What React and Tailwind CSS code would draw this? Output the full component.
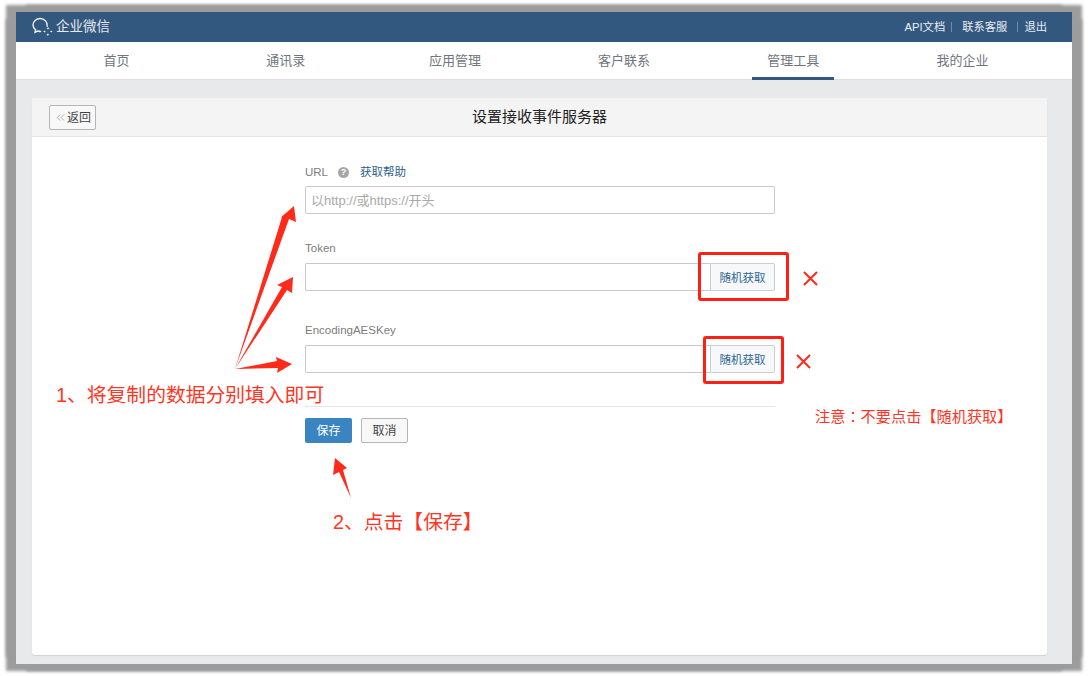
import React from "react";
import { ChevronsLeft } from "lucide-react";

const tabs = ["首页", "通讯录", "应用管理", "客户联系", "管理工具", "我的企业"];

function Logo() {
  return (
    <svg width="22" height="20" viewBox="0 0 22 20" fill="none" stroke="#fff" strokeWidth="1.4" className="opacity-90">
      <path d="M15.200 9.200c.6-4-2.700-7.700-7-7.700C4.200 1.500 1 4.400 1 8c0 2 1 3.700 2.600 4.900l-.6 2.400 2.700-1.300c1 .3 1.900.5 2.900.5" strokeLinecap="round" />
      <path d="M14.300 11.300c1.200-.2 1.500-.6 1.700-1.700.2 1.100.6 1.500 1.700 1.700-1.100.2-1.500.6-1.700 1.700-.2-1.100-.5-1.500-1.700-1.700zM17.800 14.600c1-.2 1.300-.5 1.500-1.500.2 1 .5 1.300 1.500 1.500-1 .2-1.300.5-1.500 1.500-.2-1-.5-1.300-1.500-1.500zM14.300 17.700c1.100-.2 1.400-.5 1.600-1.600.2 1.100.5 1.400 1.600 1.600-1.100.2-1.400.5-1.600 1.600-.2-1.100-.5-1.400-1.600-1.600zM11 14.500c1-.2 1.300-.5 1.500-1.500.2 1 .5 1.300 1.500 1.500-1 .2-1.300.5-1.500 1.500-.2-1-.5-1.300-1.500-1.500z" fill="#fff" stroke="none" />
    </svg>
  );
}

function FieldRow({ label, className }) {
  return (
    <div className={className}>
      <div className="text-[11.5px] leading-4 text-[#7d7d7d]">{label}</div>
      <div className="mt-[7px] flex h-[28px]">
        <input className="h-full min-w-0 flex-1 rounded-l-[2px] border border-r-0 border-[#c9c9c9] bg-white" />
        <button className="h-full w-[65px] rounded-r-[2px] border border-[#c9ced3] bg-[#f7f8f9] pt-[3px] text-[11.5px] text-[#2b6593]">
          随机获取
        </button>
      </div>
    </div>
  );
}

function Annotations() {
  return (
    <>
      <svg className="absolute left-0 top-0" width="1089" height="676" fill="#ff2a1a">
        <polygon points="235,369 282,217 279,219 294,206 296,222 289,219" />
        <polygon points="235,369 282,287 277,285 293,277 292,293 287,290" />
        <polygon points="235,369 277,361 276,357 292,364 277,373 278,368" />
        <polygon points="351,498 339,472 333,475 335,458 347,468 343,470" />
        <path d="M804 272l13 13M817 272l-13 13M797 355l13 13M810 355l-13 13" stroke="#ff2a1a" strokeWidth="2" fill="none" />
      </svg>
      <div className="absolute left-[698px] top-[252px] h-[49px] w-[91px] rounded-[3px] border-[3px] border-[#ff1f14]" />
      <div className="absolute left-[703px] top-[336px] h-[48px] w-[81px] rounded-[3px] border-[3px] border-[#ff1f14]" />
      <div className="absolute left-[56px] top-[381px] whitespace-nowrap text-[19.8px] leading-7 text-[#ff3526]">1、将复制的数据分别填入即可</div>
      <div className="absolute left-[333px] top-[508px] whitespace-nowrap text-[19.8px] leading-7 text-[#ff3526]">2、点击【保存】</div>
      <div className="absolute left-[815px] top-[405px] whitespace-nowrap text-[15.2px] leading-5 text-[#ff3526]">
        注意<span className="font-['Noto_Sans_CJK_TC',sans-serif]">：</span>不要点击【随机获取】
      </div>
    </>
  );
}

export default function App() {
  return (
    <div className="relative h-[676px] w-[1089px] overflow-hidden bg-white pb-[12px] pl-[16px] pr-[17px] pt-[12px] font-['Liberation_Sans','Noto_Sans_CJK_SC',sans-serif]">
      <div className="flex h-[652px] flex-col bg-[#e8e9eb] shadow-[-10px_-7px_3px_0_#9c9c9c,10px_-7px_3px_0_#9c9c9c,-10px_7px_3px_0_#9c9c9c,10px_7px_3px_0_#9c9c9c]">
        {/* top bar */}
        <div className="flex h-[30px] items-center justify-between bg-[#33587f] pl-[16px] pr-[25px] text-white">
          <div className="flex items-center gap-[2px]">
            <Logo />
            <span className="text-[13.5px] text-[#e4e9ef]">企业微信</span>
          </div>
          <div className="flex items-center text-[11.3px] text-[#e8edf2]">
            <span>API文档</span>
            <span className="ml-[6px] mr-[10px] h-[10px] w-px bg-[#6f8cab]" />
            <span>联系客服</span>
            <span className="ml-[10px] mr-[6px] h-[10px] w-px bg-[#6f8cab]" />
            <span>退出</span>
          </div>
        </div>

        {/* nav */}
        <div className="grid h-[38px] grid-cols-6 border-b border-[#dcdee0] bg-white pl-[16px] pr-[25px]">
          {tabs.map((t) => (
            <div key={t} className="flex justify-center">
              <div
                className={
                  "flex h-[38px] w-[82px] items-center justify-center border-b-[3px] pt-[3px] text-[13px] text-[#6f7680] " +
                  (t === "管理工具" ? "border-[#33587f]" : "border-transparent")
                }
              >
                {t}
              </div>
            </div>
          ))}
        </div>

        {/* card */}
        <div className="ml-[16px] mr-[25px] mt-[18px] flex h-[557px] flex-col rounded-[3px] bg-white shadow-[0_1px_1px_rgba(0,0,0,0.1)]">
          <div className="relative flex h-[39px] flex-none items-center justify-center rounded-t-[3px] border-b border-[#e2e4e7] bg-[#f4f4f5]">
            <button className="absolute left-[17px] top-[7px] flex h-[25px] w-[47px] items-center justify-center rounded-[2px] border border-[#b5b5b5] bg-[#f8f8f8] text-xs text-[#444]">
              <ChevronsLeft size={13} strokeWidth={1.2} className="text-[#888]" />
              返回
            </button>
            <div className="text-[15px] text-[#222]">设置接收事件服务器</div>
          </div>

          <div className="ml-[273px] w-[470px] pt-[27px]">
            <div className="flex items-center text-[11.5px] leading-4 text-[#7d7d7d]">
              <span>URL</span>
              <span className="ml-[10px] flex h-[11px] w-[11px] items-center justify-center rounded-full bg-[#a6a6a6] text-[9px] font-bold text-white">?</span>
              <span className="ml-[11px] text-[#2b5f8c]">获取帮助</span>
            </div>
            <div className="mt-[6px] h-[28px]">
              <input
                placeholder="以http://或https://开头"
                className="h-full w-full rounded-[2px] border border-[#c9c9c9] bg-white px-[5px] text-[13px] placeholder:text-[#a9a9a9]"
              />
            </div>
            <FieldRow label="Token" className="mt-[26px]" />
            <FieldRow label="EncodingAESKey" className="mt-[31px]" />
            <div className="mt-[33px] border-t border-[#e6e6e6]" />
            <div className="mt-[11px] flex gap-[9px]">
              <button className="h-[25px] w-[47px] rounded-[2px] bg-[#3a84c1] text-xs text-white">保存</button>
              <button className="h-[25px] w-[47px] rounded-[2px] border border-[#b5b5b5] bg-[#f8f8f8] text-xs text-[#444]">取消</button>
            </div>
          </div>
        </div>
      </div>

      <Annotations />
    </div>
  );
}
